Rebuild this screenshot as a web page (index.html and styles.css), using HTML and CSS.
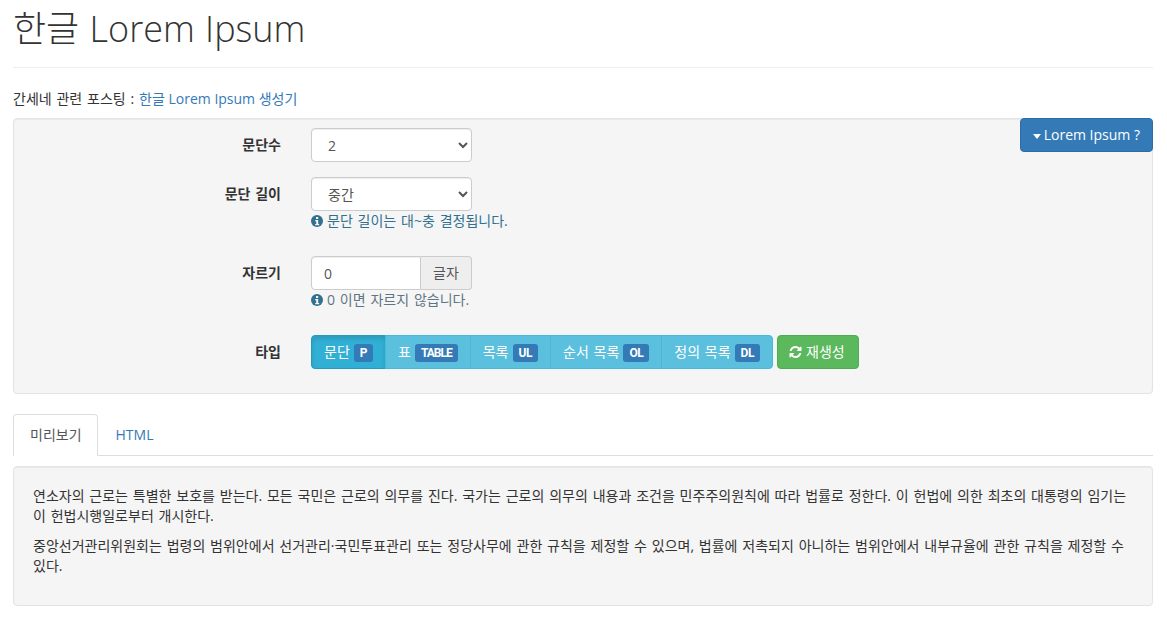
FILE: index.html
```html
<!DOCTYPE html>
<html lang="ko">
<head>
<meta charset="utf-8">
<title>한글 Lorem Ipsum</title>
<link rel="stylesheet" href="styles.css">
</head>
<body>
<div class="container">
  <h1 class="title">한글 Lorem Ipsum</h1>
  <hr class="rule">
  <p class="intro">간세네 관련 포스팅 : <a href="#">한글 Lorem Ipsum 생성기</a></p>
  <div class="well form">
    <a href="#" class="help-btn"><span class="caret"></span>Lorem Ipsum ?</a>
    <div class="row">
      <label class="label">문단수</label>
      <div class="field"><select class="control"><option>2</option></select></div>
    </div>
    <div class="row row-help">
      <label class="label">문단 길이</label>
      <div class="field">
        <select class="control"><option>중간</option></select>
        <p class="help"><svg class="info" viewBox="0 0 12 12"><circle cx="6" cy="6" r="6" fill="#31708f"/><rect x="5" y="2" width="2.2" height="2" fill="#f5f5f5"/><path d="M4.2 5h3v4h1v1.2H4.2V9h1V6.2h-1z" fill="#f5f5f5"/></svg>문단 길이는 대~충 결정됩니다.</p>
      </div>
    </div>
    <div class="row row-help">
      <label class="label">자르기</label>
      <div class="field">
        <div class="group"><input class="control input" value="0"><span class="addon">글자</span></div>
        <p class="help help-muted"><svg class="info" viewBox="0 0 12 12"><circle cx="6" cy="6" r="6" fill="#31708f"/><rect x="5" y="2" width="2.2" height="2" fill="#f5f5f5"/><path d="M4.2 5h3v4h1v1.2H4.2V9h1V6.2h-1z" fill="#f5f5f5"/></svg>0 이면 자르지 않습니다.</p>
      </div>
    </div>
    <div class="row row-last">
      <label class="label">타입</label>
      <div class="field types">
        <div class="btn-group">
          <a href="#" class="seg active">문단<span class="badge">P</span></a>
          <a href="#" class="seg">표<span class="badge badge-long">TABLE</span></a>
          <a href="#" class="seg">목록<span class="badge">UL</span></a>
          <a href="#" class="seg">순서 목록<span class="badge">OL</span></a>
          <a href="#" class="seg">정의 목록<span class="badge">DL</span></a>
        </div>
        <a href="#" class="regen"><svg class="refresh" viewBox="0 0 1536 1792"><path fill="#fff" d="M1511 1056q0 5-1 7-64 268-268 434.500t-478 166.500q-146 0-282.500-55t-243.500-157l-129 129q-19 19-45 19t-45-19-19-45v-448q0-26 19-45t45-19h448q26 0 45 19t19 45-19 45l-137 137q71 66 161 102t187 36q134 0 250-65t186-179q11-17 53-117 8-23 30-23h192q13 0 22.500 9.500t9.500 22.500zm25-800v448q0 26-19 45t-45 19h-448q-26 0-45-19t-19-45 19-45l138-138q-148-137-349-137-134 0-250 65t-186 179q-11 17-53 117-8 23-30 23h-199q-13 0-22.500-9.500t-9.500-22.500v-7q65-268 270-434.500t480-166.500q146 0 284 55.500t245 156.500l130-129q19-19 45-19t45 19 19 45z"/></svg>재생성</a>
      </div>
    </div>
  </div>
  <ul class="tabs">
    <li class="tab current"><a href="#">미리보기</a></li>
    <li class="tab"><a href="#">HTML</a></li>
  </ul>
  <div class="well preview">
    <p>연소자의 근로는 특별한 보호를 받는다. 모든 국민은 근로의 의무를 진다. 국가는 근로의 의무의 내용과 조건을 민주주의원칙에 따라 법률로 정한다. 이 헌법에 의한 최초의 대통령의 임기는 이 헌법시행일로부터 개시한다.</p>
    <p>중앙선거관리위원회는 법령의 범위안에서 선거관리·국민투표관리 또는 정당사무에 관한 규칙을 제정할 수 있으며, 법률에 저촉되지 아니하는 범위안에서 내부규율에 관한 규칙을 제정할 수 있다.</p>
  </div>
</div>
</body>
</html>
```
FILE: styles.css
```css
* { box-sizing: border-box; }
html, body { margin: 0; padding: 0; background: #fff; }
body {
  font-family: "Open Sans", "Noto Sans CJK KR", sans-serif;
  font-size: 14px;
  line-height: 20px;
  color: #333;
  word-spacing: 1.2px;
}
a { color: #337ab7; text-decoration: none; }
.container { width: 1140px; margin-left: 13px; }
.title { margin: 0; padding-top: 9px; font-size: 36px; line-height: 40px; font-weight: 300; height: 52px; word-spacing: 1px; }
.rule { border: 0; border-top: 1px solid #eee; margin: 15px 0 21px; }
.intro { margin: 0 0 9px; height: 20px; }
.intro a { word-spacing: 0; }
.well {
  background: #f5f5f5;
  border: 1px solid #e3e3e3;
  border-radius: 4px;
  box-shadow: inset 0 1px 1px rgba(0,0,0,.05);
}
.form { position: relative; height: 276px; padding: 9px 0 0; }
.help-btn {
  position: absolute; top: -1px; right: -1px;
  height: 34px; padding: 6px 12px;
  background: #337ab7; border: 1px solid #2e6da4; border-radius: 4px;
  color: #fff; line-height: 20px; word-spacing: 0;
}
.caret {
  display: inline-block; width: 0; height: 0; margin-right: 3px; vertical-align: middle;
  border-top: 5px solid #fff; border-left: 4.5px solid transparent; border-right: 4.5px solid transparent;
}
.row { display: flex; margin-bottom: 15px; }
.row-help { margin-bottom: 25px; }
.row-last { margin-bottom: 0; }
.label { width: 267px; text-align: right; font-weight: 700; padding-top: 7px; flex: none; }
.field { margin-left: 30px; }
.control {
  display: block; width: 161px; height: 34px; padding: 6px 12px;
  font: inherit; color: #555; background: #fff;
  border: 1px solid #ccc; border-radius: 4px;
  box-shadow: inset 0 1px 1px rgba(0,0,0,.075);
}
.group { display: flex; width: 161px; }
.input { flex: 1; width: 110px; min-width: 0; border-radius: 4px 0 0 4px; }
.addon {
  width: 51px; flex: none; text-align: center; padding: 6px 0; color: #555;
  background: #eee; border: 1px solid #ccc; border-left: 0; border-radius: 0 4px 4px 0;
}
.help { margin: 0; color: #31708f; height: 20px; display: flex; align-items: center; }
.help-muted { color: #5f7584; }
.info { width: 12px; height: 12px; margin-right: 4px; flex: none; }
.types { display: flex; gap: 4px; }
.btn-group { display: flex; height: 34px; }
.seg {
  display: block; padding: 6px 12px; color: #fff; line-height: 20px; white-space: nowrap;
  background: #5bc0de; border: 1px solid #46b8da; margin-left: -1px;
}
.seg:first-child { margin-left: 0; border-radius: 4px 0 0 4px; }
.seg:last-child { border-radius: 0 4px 4px 0; }
.seg.active { background: #31b0d5; border-color: #269abc; box-shadow: inset 0 3px 5px rgba(0,0,0,.125); }
.badge {
  display: inline-block; margin-left: 4px; padding: 0 6px; height: 18px; vertical-align: 0;
  background: #337ab7; color: #fff; border-radius: 3px;
  font: 700 12px/18px Roboto, "Liberation Sans", sans-serif; letter-spacing: -.45px;
}
.badge-long { letter-spacing: -1px; }
.regen {
  display: block; height: 34px; padding: 6px 13px 6px 11px; color: #fff;
  background: #5cb85c; border: 1px solid #4cae4c; border-radius: 4px; white-space: nowrap;
}
.refresh { width: 13px; height: 14px; margin-right: 4px; vertical-align: -2px; }
.tabs { list-style: none; margin: 20px 0 10px; padding: 0; display: flex; height: 42px; border-bottom: 1px solid #ddd; }
.tab a { display: block; height: 42px; padding: 10px 15px 10px 16px; line-height: 20px; margin-right: 1px; border: 1px solid transparent; border-radius: 4px 4px 0 0; }
.tab.current a { color: #555; background: #fff; border-color: #ddd #ddd #fff; }
.preview { height: 140px; padding: 19px; }
.preview p { margin: 0 0 10px; }
```
